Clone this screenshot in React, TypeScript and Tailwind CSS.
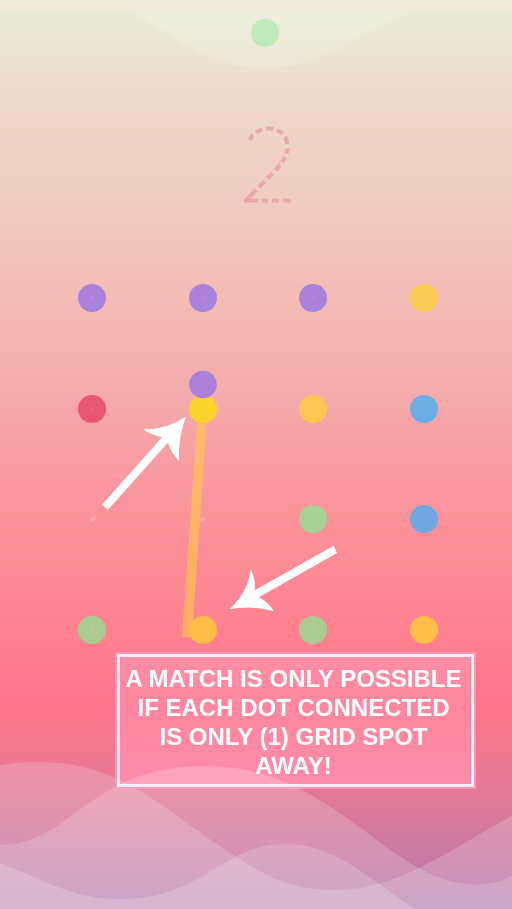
const boardDots: { name: string; color: string }[] = [
  { name: "purple", color: "bg-[#a983db]" },
  { name: "purple", color: "bg-[#a983db]" },
  { name: "purple", color: "bg-[#a983db]" },
  { name: "yellow", color: "bg-[#fdcb54]" },
  { name: "red", color: "bg-[#ea5774]" },
  { name: "selected yellow", color: "bg-[#fed22d]" },
  { name: "yellow", color: "bg-[#fec552]" },
  { name: "blue", color: "bg-[#6cade6]" },
  { name: "empty", color: "" },
  { name: "empty", color: "" },
  { name: "green", color: "bg-[#a8d194]" },
  { name: "blue", color: "bg-[#6fa8e3]" },
  { name: "green", color: "bg-[#a9cd91]" },
  { name: "yellow", color: "bg-[#febd46]" },
  { name: "green", color: "bg-[#a9cd91]" },
  { name: "yellow", color: "bg-[#febd46]" },
];

// Breaks that turn the score digit into a dashed one: x, y and angle of each.
const gaps: [number, number, number][] = [
  [248, 148, 0], [248, 145, 0], [249, 142, 20],
  [254, 133, 55], [264, 129, 80], [275, 130, 112], [283, 136, 140],
  [288, 146, 165], [289, 156, 10], [284, 166, 40], [276, 174, 45],
  [268, 182, 45], [259, 190, 45],
  [260, 200, 90], [270, 200, 90], [281, 200, 90],
];

function Score() {
  return (
    <svg viewBox="236 100 64 124" className="h-[124px] w-16" role="img" aria-label="Score 2">
      <mask id="dashes" maskUnits="userSpaceOnUse" x="236" y="100" width="64" height="124">
        <rect x="236" y="100" width="64" height="124" fill="white" />
        {gaps.map(([x, y, angle]) => (
          <rect key={`${x}-${y}`} x={x - 5} y={y - 2} width="10" height="4" fill="black" transform={`rotate(${angle} ${x} ${y})`} />
        ))}
      </mask>
      <g mask="url(#dashes)" opacity="0.75">
        <text
          x="268"
          y="201"
          textAnchor="middle"
          fontSize="102"
          className="fill-[#e99aa3] stroke-[#e99aa3] font-['Lato',sans-serif] font-thin"
          strokeWidth="3"
          strokeLinejoin="round"
        >
          2
        </text>
      </g>
    </svg>
  );
}

function Scenery() {
  return (
    <svg viewBox="0 0 512 909" preserveAspectRatio="none" className="absolute inset-0 h-full w-full" aria-hidden="true">
      <rect width="512" height="11" fill="#f1eadb" />
      <path d="M130 11 C175 36 205 68 265 68 C330 68 365 26 415 11 Z" fill="white" fillOpacity="0.18" />
      <g fill="white" fillOpacity="0.18">
        <path d="M0 765 Q17 762 35 762 C125 762 155 805 235 856 C262 874 290 890 335 890 C400 890 450 849 512 816 V909 H0 Z" />
        <path d="M0 845 C72 845 88 766 205 766 C305 766 355 832 420 869 C451 886 488 890 512 876 V909 H0 Z" />
        <path d="M0 863 C38 877 72 899 118 899 C205 899 222 844 284 844 C335 844 365 876 415 909 H0 Z" />
      </g>
    </svg>
  );
}

function Board() {
  return (
    <section aria-label="Board" className="relative mx-auto grid w-[442px] max-w-full grid-cols-4">
      <svg viewBox="37 243 442 442" className="absolute inset-0 h-full w-full" aria-hidden="true">
        <path d="M198 409 H207.500 L192 637 H182 Z" fill="#ffc34f" fillOpacity="0.68" />
      </svg>
      {boardDots.map((dot, index) => (
        <div key={index} className="relative flex aspect-square items-center justify-center">
          <span className={`flex size-7 items-center justify-center rounded-full ${dot.color}`}>
            <span className={dot.color ? "size-1 rounded-full bg-white/5" : "size-[5px] rounded-full bg-white/20"} />
          </span>
        </div>
      ))}
      <svg viewBox="37 243 442 442" className="absolute inset-0 h-full w-full" aria-hidden="true">
        <circle cx="203" cy="384.500" r="13.800" fill="#a97edb" fillOpacity="0.97" />
        <g fill="white">
          <path d="M186 416.500 Q166 430 143 429.300 Q151 435 162 437.300 L102 504.700 L108 509.700 L168 442.500 Q171 453 179 461 Q178 438 186 416.500 Z" />
          <path d="M229.500 609.300 Q248 592 250.700 569.300 Q256 579 254.700 590.300 L333.700 545.700 L337 553 L259 597.300 Q268 602 274 611.300 Q252 605 229.500 609.300 Z" />
        </g>
      </svg>
    </section>
  );
}

export default function App() {
  return (
    <main className="relative min-h-screen overflow-hidden bg-[linear-gradient(to_bottom,#e9ead4_0%,#e9ead4_2%,#ecdccb_10%,#f3c0b8_30%,#f6a9aa_44%,#fb929a_57%,#ff8090_70%,#ff7488_78%,#f7778c_81%,#e07a98_88%,#c77aa5_95%,#b27ba9_100%)]">
      <Scenery />
      <div className="relative">
        <header className="flex flex-col items-center pt-[19px]">
          <span className="ml-[18px] size-7 rounded-full bg-[#bfebb8]" />
          <div className="mt-[53px] ml-6">
            <Score />
          </div>
        </header>
        <div className="mt-[19px] pl-1">
          <Board />
        </div>
        <div className="-mt-[33px] pr-9 pb-16 pl-[115px]">
          <div className="border-2 border-[#ffa0bd]/80">
            <div className="relative border-3 border-[#fdecf9]">
              <div className="absolute inset-0 bg-[#2d1216] mix-blend-plus-lighter" />
              <p className="relative pt-[7px] pr-1 pb-1 text-center font-['Liberation_Sans',Arial,sans-serif] text-2xl leading-[29px] font-bold text-white">
                A MATCH IS ONLY POSSIBLE
                <br />
                IF EACH DOT CONNECTED
                <br />
                IS ONLY (1) GRID SPOT
                <br />
                AWAY!
              </p>
            </div>
          </div>
        </div>
      </div>
    </main>
  );
}
